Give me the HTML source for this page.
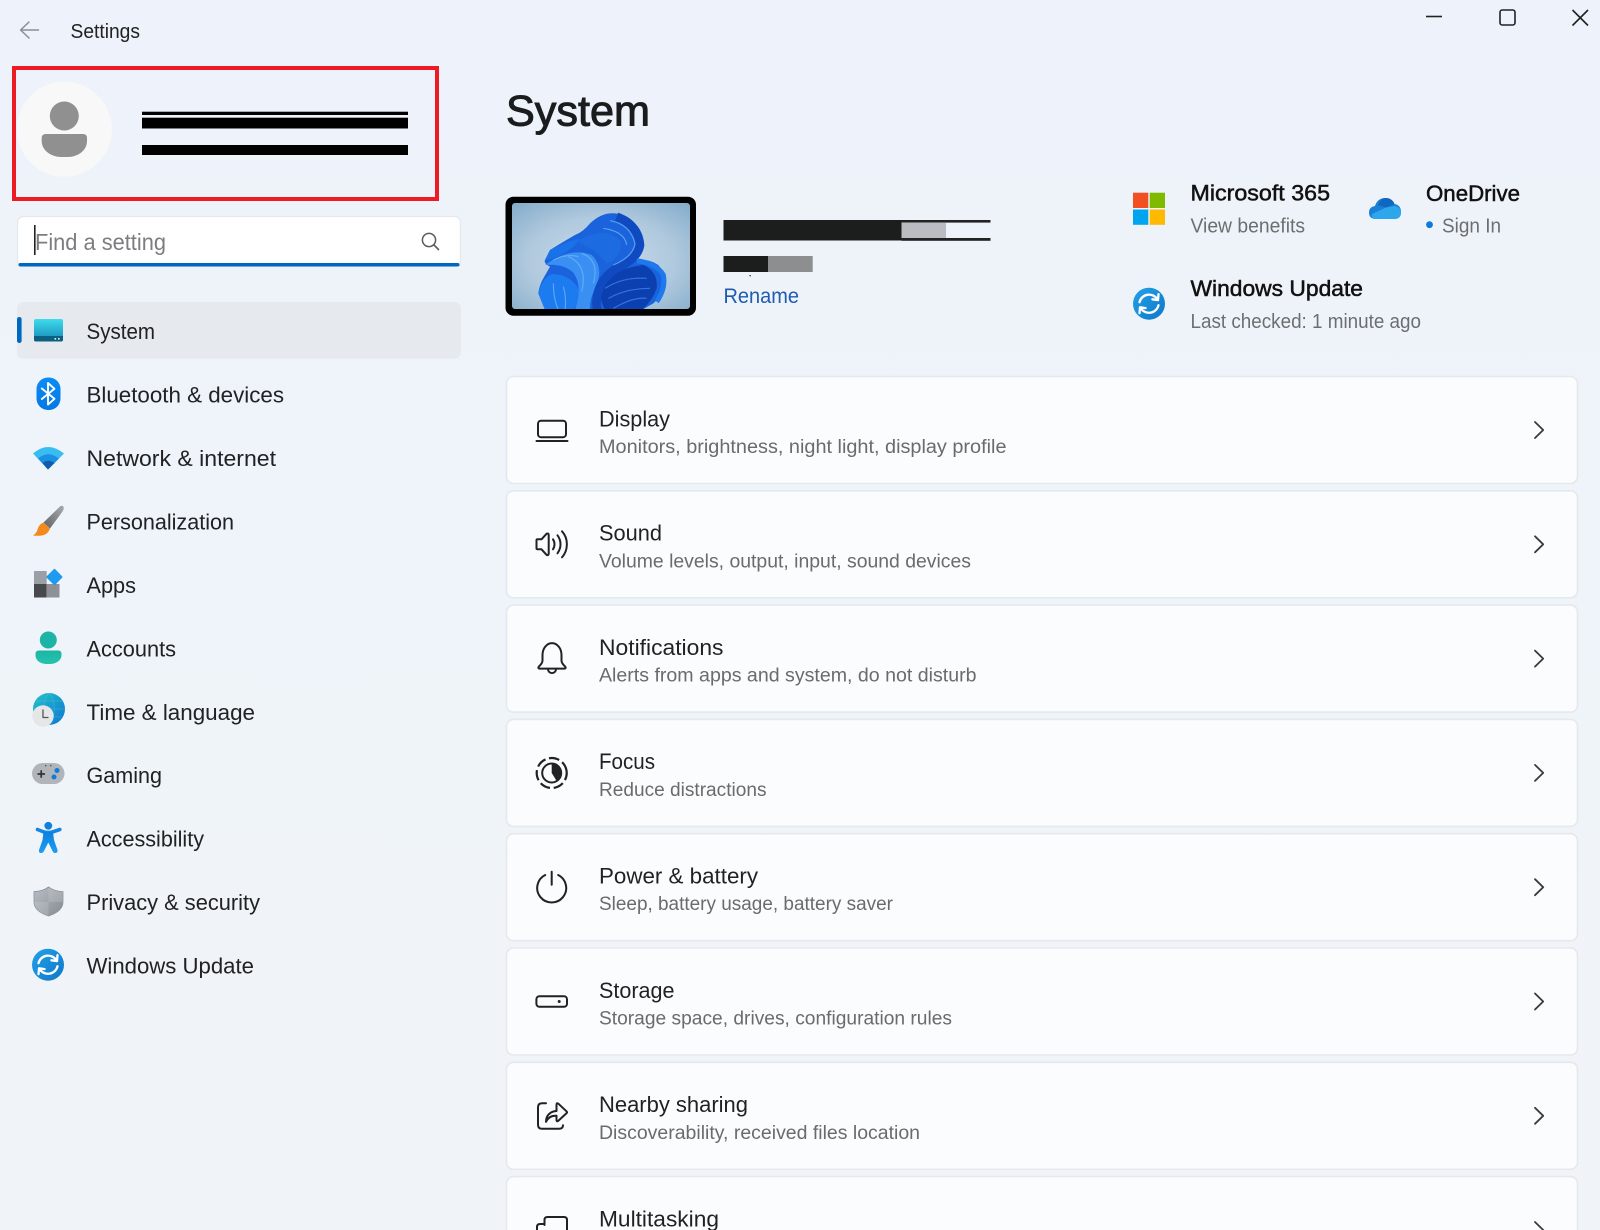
<!DOCTYPE html>
<html lang="en">
<head>
<meta charset="utf-8">
<title>Settings</title>
<style>
html,body{margin:0;padding:0;width:1600px;height:1230px;overflow:hidden;background:#eff3f9}
svg{display:block;position:absolute;left:0;top:0;filter:blur(.35px)}
text{font-family:"Liberation Sans",Arial,sans-serif}
.nav{font-size:22.5px;fill:#202224}
.ttl{font-size:22px;fill:#1f2123}
.sub{font-size:19px;fill:#696b6d}
.sb{font-size:22px;fill:#111;stroke:#111;stroke-width:.5px}
.sm{font-size:20px;fill:#6c6e70}
.card{fill:#fbfcfd;stroke:#e5e9ee;stroke-width:1.6}
.ic{fill:none;stroke:#222;stroke-width:2;stroke-linecap:round;stroke-linejoin:round}
.ch{fill:none;stroke:#3a3a3a;stroke-width:1.8;stroke-linecap:round;stroke-linejoin:round}
</style>
</head>
<body>
<svg xmlns="http://www.w3.org/2000/svg" width="1600" height="1230" viewBox="0 0 1600 1230">
<defs>
<linearGradient id="gBg" x1="0" y1="0" x2="0" y2="1"><stop offset="0" stop-color="#eef3fb"/><stop offset="1" stop-color="#f0f4f8"/></linearGradient>
<linearGradient id="gSys" x1="0" y1="0" x2="0" y2="1"><stop offset="0" stop-color="#3fdcec"/><stop offset="1" stop-color="#1487b8"/></linearGradient>
<linearGradient id="gBt" x1="0" y1="0" x2="0" y2="1"><stop offset="0" stop-color="#0a8cf5"/><stop offset="1" stop-color="#0478e6"/></linearGradient>
<linearGradient id="gTeal" x1="0" y1="0" x2="0" y2="1"><stop offset="0" stop-color="#1cb5a5"/><stop offset="1" stop-color="#25c4ae"/></linearGradient>
<linearGradient id="gGlobe" x1="0" y1="0" x2="1" y2="1"><stop offset="0" stop-color="#22c3c9"/><stop offset="1" stop-color="#0f76d2"/></linearGradient>
<linearGradient id="gShield" x1="0" y1="0" x2="1" y2="1"><stop offset="0" stop-color="#b9bfc5"/><stop offset="1" stop-color="#858b92"/></linearGradient>
<linearGradient id="gBrush" x1="1" y1="0" x2="0" y2="1"><stop offset="0" stop-color="#a6a9ad"/><stop offset="1" stop-color="#5f6367"/></linearGradient>
<linearGradient id="gAcc" x1="0" y1="0" x2="0" y2="1"><stop offset="0" stop-color="#0f7fe0"/><stop offset="1" stop-color="#1a9df0"/></linearGradient>
<linearGradient id="gUpd" x1="0" y1="0" x2="1" y2="1"><stop offset="0" stop-color="#22a2e8"/><stop offset="1" stop-color="#0f77c9"/></linearGradient>
<radialGradient id="gWall" cx=".5" cy=".55" r=".75"><stop offset="0" stop-color="#cbdcea"/><stop offset=".55" stop-color="#b0c9de"/><stop offset="1" stop-color="#82abc9"/></radialGradient>
<clipPath id="clipWall"><rect x="512" y="203" width="178" height="106" rx="3"/></clipPath>
<g id="upd">
  <circle r="16" fill="url(#gUpd)"/>
  <path d="M-9.5 -1.5A9.8 9.8 0 0 1 8 -5" fill="none" stroke="#fff" stroke-width="2.3" stroke-linecap="round"/>
  <path d="M9.5 -9.5L9 -3.6L3.4 -4.4" fill="none" stroke="#fff" stroke-width="2.3" stroke-linecap="round" stroke-linejoin="round"/>
  <path d="M9.5 1.5A9.8 9.8 0 0 1 -8 5" fill="none" stroke="#fff" stroke-width="2.3" stroke-linecap="round"/>
  <path d="M-9.5 9.5L-9 3.6L-3.4 4.4" fill="none" stroke="#fff" stroke-width="2.3" stroke-linecap="round" stroke-linejoin="round"/>
</g>
<path id="chev" class="ch" d="M-3.8 -8L4.4 0L-3.8 8"/>
</defs>

<rect width="1600" height="1230" fill="url(#gBg)"/>

<!-- title bar -->
<path d="M38.5 30H21M29 22L20.6 30L29 38" fill="none" stroke="#8b8e92" stroke-width="1.5" stroke-linecap="round" stroke-linejoin="round"/>
<text x="70.5" y="38" font-size="20" fill="#222" textLength="69.5" lengthAdjust="spacingAndGlyphs">Settings</text>
<path d="M1426 16.5H1442" stroke="#222" stroke-width="1.6"/>
<rect x="1500" y="10" width="15" height="15" rx="2.2" fill="none" stroke="#222" stroke-width="1.6"/>
<path d="M1572.5 10L1588 25.5M1588 10L1572.5 25.5" stroke="#222" stroke-width="1.6"/>

<!-- profile -->
<rect x="14" y="68" width="423" height="131" fill="none" stroke="#ed1c24" stroke-width="4"/>
<circle cx="64.3" cy="129.3" r="47.5" fill="#f8f8f8"/>
<circle cx="64.3" cy="116" r="14.5" fill="#909090"/>
<path d="M46 134H83Q87 134 87 138V141C87 151 77 157 68 157H61C52 157 41.7 151 41.7 141V138Q41.7 134 46 134Z" fill="#909090"/>
<rect x="142" y="111.7" width="266" height="3.3" fill="#000"/>
<rect x="142" y="117.7" width="266" height="10.8" fill="#000"/>
<rect x="142" y="145" width="266" height="10" fill="#000"/>

<!-- search -->
<rect x="17.5" y="216.500" width="443" height="49.500" rx="6" fill="#fff" stroke="#e4e7ec" stroke-width="1.2"/>
<path d="M18.500 264.600Q18.500 263 20.500 263H457.500Q459.500 263 459.500 264.600V265Q459.500 266.500 457.500 266.500H20.500Q18.500 266.500 18.500 265Z" fill="#0067c0"/>
<text x="35" y="250" font-size="23.5" fill="#7b7d80" textLength="131" lengthAdjust="spacingAndGlyphs">Find a setting</text>
<rect x="34" y="225" width="1.6" height="30" fill="#222"/>
<circle cx="429" cy="240" r="6.6" fill="none" stroke="#5a5c5f" stroke-width="1.5"/>
<path d="M434 245L438.5 249.5" stroke="#5a5c5f" stroke-width="1.6" stroke-linecap="round"/>

<!-- nav -->
<rect x="17" y="302" width="444" height="56.5" rx="6" fill="#e6e9ee"/>
<rect x="17" y="317" width="4.6" height="26" rx="2.3" fill="#0067c0"/>

<rect x="34" y="319" width="29" height="22.5" rx="2" fill="url(#gSys)"/>
<path d="M34 336H63V339.5Q63 341.5 61 341.5H36Q34 341.5 34 339.5Z" fill="#0d5f80"/>
<rect x="54.5" y="338" width="1.6" height="1.6" fill="#cfe"/><rect x="58" y="338" width="1.6" height="1.6" fill="#cfe"/>
<text class="nav" x="86.500" y="339.200" textLength="68.500" lengthAdjust="spacingAndGlyphs">System</text>

<rect x="36.5" y="377.5" width="24" height="32.5" rx="11.5" fill="url(#gBt)"/>
<path d="M41.800 388.500L54.500 398.800L48 404.500V383L54.500 388.800L41.800 399" fill="none" stroke="#fff" stroke-width="1.9" stroke-linejoin="round" stroke-linecap="round"/>
<text class="nav" x="86.500" y="402.600" textLength="197.500" lengthAdjust="spacingAndGlyphs">Bluetooth &amp; devices</text>

<path d="M33 453.500Q48 440.500 64 453.500L48.500 469Q48 469.500 47.500 469Z" fill="#37bdf2"/>
<path d="M38 458.500Q48 450 59 458.500L48.500 469Q48 469.500 47.500 469Z" fill="#1c8fe2"/>
<path d="M42.500 463Q48 458.500 54.500 463L48.500 469Q48 469.500 47.500 469Z" fill="#0f5cab"/>
<text class="nav" x="86.500" y="466.100" textLength="189.500" lengthAdjust="spacingAndGlyphs">Network &amp; internet</text>

<path d="M60.500 506Q63.500 505 63.800 508Q63.800 509.500 62.500 511.500L50 528.500L43.500 522.500Z" fill="url(#gBrush)"/>
<path d="M43.500 522.500L50 528.500Q48 534.500 42 535.500Q37 536 33 535.500Q37 533 38 528Q39.500 524 43.500 522.500Z" fill="#f28a1d"/>
<text class="nav" x="86.500" y="529.500" textLength="147.500" lengthAdjust="spacingAndGlyphs">Personalization</text>

<rect x="34" y="571" width="12.700" height="13" fill="#9ba0a6"/>
<rect x="34" y="584" width="12.700" height="13.500" fill="#47494c"/>
<rect x="46.700" y="584" width="12.800" height="13.500" fill="#8d9196"/>
<path d="M54.500 569.500L61.800 577L54.500 584.500L47 577Z" fill="#1e9af0" stroke="#1e9af0" stroke-width="1.500" stroke-linejoin="round"/>
<text class="nav" x="86.500" y="593" textLength="49.500" lengthAdjust="spacingAndGlyphs">Apps</text>

<circle cx="48.300" cy="640" r="8.500" fill="#1cb5a5"/>
<path d="M39 650.500H58Q61.500 650.500 61.500 654V655C61.500 661 55 664 50 664H47C41 664 35.500 661 35.500 655V654Q35.500 650.500 39 650.500Z" fill="url(#gTeal)"/>
<text class="nav" x="86.500" y="656.400" textLength="89.500" lengthAdjust="spacingAndGlyphs">Accounts</text>

<circle cx="49" cy="709" r="16" fill="url(#gGlobe)"/>
<path d="M49 693C42 700 42 718 49 725C56 718 56 700 49 693M33 709H65M36 701H62M36 717H62" fill="none" stroke="#6fd6e6" stroke-width=".7" opacity=".3"/>
<circle cx="43" cy="716" r="10.700" fill="#e5e6e8"/>
<path d="M43 710V717.500H48" fill="none" stroke="#555" stroke-width="1.300" stroke-linecap="round" stroke-linejoin="round"/>
<text class="nav" x="86.500" y="719.800" textLength="168.500" lengthAdjust="spacingAndGlyphs">Time &amp; language</text>

<rect x="32" y="763" width="32.500" height="21" rx="10.500" fill="#b1b5ba"/>
<path d="M37.500 774H45M41.200 770.300V777.700" stroke="#333" stroke-width="1.700"/>
<circle cx="57" cy="770.500" r="2.500" fill="#0f7ae0"/><circle cx="54" cy="777" r="2.500" fill="#0f7ae0"/>
<rect x="45" y="765" width="1.500" height="1.300" fill="#555"/><rect x="50" y="765" width="1.500" height="1.300" fill="#555"/>
<text class="nav" x="86.500" y="783.200" textLength="75.500" lengthAdjust="spacingAndGlyphs">Gaming</text>

<circle cx="48.300" cy="825.800" r="3.900" fill="#0f7fe0"/>
<path d="M37.500 829.500L44 832Q48.300 833 52.500 832L59.800 829.500" fill="none" stroke="#1486e6" stroke-width="3.600" stroke-linecap="round"/>
<path d="M43.500 832H53L54 840L57.500 850Q58 853 55 853Q53.500 853 52.500 851L48.300 842.500L44 851Q43 853 41 853Q38.500 853 39 850L42.500 840Z" fill="url(#gAcc)"/>
<text class="nav" x="86.500" y="846.700" textLength="117.500" lengthAdjust="spacingAndGlyphs">Accessibility</text>

<path d="M48.500 887C53 890.500 58 891.500 63 891.500V902C63 909 56 913.500 48.500 916C41 913.500 34 909 34 902V891.500C39 891.500 44 890.500 48.500 887Z" fill="url(#gShield)" stroke="#8d9298" stroke-width=".8"/>
<path d="M48.500 887V916C41 913.500 34 909 34 902H63V891.500C58 891.500 53 890.500 48.500 887Z" fill="#fff" opacity=".13"/>
<text class="nav" x="86.500" y="910.200" textLength="173.500" lengthAdjust="spacingAndGlyphs">Privacy &amp; security</text>

<use href="#upd" transform="translate(48 964.700)"/>
<text class="nav" x="86.500" y="973.400" textLength="167.500" lengthAdjust="spacingAndGlyphs">Windows Update</text>

<!-- header -->
<text x="506" y="125.700" font-size="43" fill="#1b1c1d" stroke="#1b1c1d" stroke-width="1" textLength="144" lengthAdjust="spacingAndGlyphs">System</text>

<!-- device -->
<rect x="505.500" y="196.700" width="190.500" height="119" rx="8" fill="#000"/>
<rect x="512" y="203" width="178" height="106" rx="3" fill="url(#gWall)"/>
<g clip-path="url(#clipWall)">
  <g transform="translate(510 200) scale(.33333)">
    <path d="M105 330L85 280Q88 255 100 235L120 200Q100 190 105 180L120 150Q160 125 195 105Q220 95 240 70Q270 42 300 40Q345 38 370 65Q395 100 395 140Q392 165 375 180Q415 175 445 195Q470 225 465 260Q455 290 430 310L395 330Z" fill="#1a63dc"/>
    <path d="M85 280Q100 225 130 222Q180 225 205 265Q215 300 190 330H105Z" fill="#1d7bf0"/>
    <path d="M120 150Q170 125 210 115Q190 150 130 175L105 180Z" fill="#1a72e8"/>
    <path d="M105 195Q180 140 245 165Q285 205 255 265Q238 300 240 330H195Q220 260 190 218Q160 190 105 195Z" fill="#3a8ff2"/>
    <path d="M200 125Q280 75 330 120Q340 170 290 190Q260 150 200 125Z" fill="#1c6be0"/>
    <path d="M270 250Q320 205 400 195Q445 215 440 265Q425 305 395 330H285Q265 290 270 250Z" fill="#0c3fb0"/>
    <path d="M320 50Q385 75 390 135Q385 175 320 205Q280 230 268 265Q255 300 262 330" fill="none" stroke="#0f4ac0" stroke-width="26"/>
    <path d="M380 182Q440 190 460 225Q468 265 440 305" fill="none" stroke="#1e78ee" stroke-width="15"/>
    <path d="M300 62Q360 72 375 130Q370 170 310 195M280 85Q345 95 350 135M215 160Q270 180 250 250M175 170Q235 195 215 275M130 180Q170 160 205 170M160 260Q170 295 165 330M130 250Q130 295 145 330" fill="none" stroke="#6fb4f8" stroke-width="3.500" opacity=".75"/>
    <path d="M285 265Q340 230 410 235M295 295Q350 265 420 265M310 325Q370 290 410 295" fill="none" stroke="#3a7ee8" stroke-width="3.500" opacity=".85"/>
  </g>
</g>

<rect x="723.500" y="220" width="178" height="20.500" fill="#1c1e1d"/>
<rect x="901.500" y="223" width="44.500" height="15" fill="#b9bcc0"/>
<rect x="901.500" y="220" width="89" height="2.600" fill="#222"/>
<rect x="901.500" y="238" width="89" height="2.800" fill="#222"/>
<rect x="723.500" y="256" width="44.500" height="16" fill="#1c1e1d"/>
<rect x="768" y="256" width="44.700" height="16" fill="#8c8e90"/>
<rect x="749.500" y="275" width="1.300" height="1.300" fill="#333"/>
<text x="723.500" y="303" font-size="21" fill="#1f5bae" textLength="75.500" lengthAdjust="spacingAndGlyphs">Rename</text>

<!-- top right -->
<rect x="1133" y="192.700" width="15.300" height="15.300" fill="#f25022"/>
<rect x="1149.700" y="192.700" width="15.300" height="15.300" fill="#7fba00"/>
<rect x="1133" y="209.500" width="15.300" height="15.300" fill="#00a4ef"/>
<rect x="1149.700" y="209.500" width="15.300" height="15.300" fill="#ffb900"/>
<text class="sb" x="1190.500" y="200.700" textLength="139.500" lengthAdjust="spacingAndGlyphs">Microsoft 365</text>
<text class="sm" x="1190.500" y="232.700" textLength="114.500" lengthAdjust="spacingAndGlyphs">View benefits</text>

<path d="M1375 219Q1369 218.500 1369 212.500Q1369 207 1375 206Q1377.500 198 1385.500 198Q1392 198 1394.500 204Q1401 205 1401 212Q1401 218.500 1395 219Z" fill="#1a7fd6"/>
<path d="M1375 219Q1370.500 218.500 1372 214L1386 207.500L1394.500 206Q1401 207 1401 212.500Q1401 218.500 1395 219Z" fill="#2ea6ec"/>
<path d="M1378 205Q1381 198 1385.500 198Q1392 198 1394.500 204L1386 207.500Z" fill="#0f67bf"/>
<text class="sb" x="1426" y="201" textLength="94" lengthAdjust="spacingAndGlyphs">OneDrive</text>
<circle cx="1429.500" cy="224.700" r="3.400" fill="#0f78dc"/>
<text class="sm" x="1442" y="232.500" textLength="59" lengthAdjust="spacingAndGlyphs">Sign In</text>

<use href="#upd" transform="translate(1149 303.700)"/>
<text class="sb" x="1190.500" y="295.800" textLength="172.500" lengthAdjust="spacingAndGlyphs">Windows Update</text>
<text class="sm" x="1190.500" y="328" textLength="230.500" lengthAdjust="spacingAndGlyphs">Last checked: 1 minute ago</text>

<!-- cards -->
<rect class="card" x="506.500" y="376.500" width="1071" height="107" rx="7"/>
<rect class="card" x="506.500" y="490.800" width="1071" height="107" rx="7"/>
<rect class="card" x="506.500" y="605.100" width="1071" height="107" rx="7"/>
<rect class="card" x="506.500" y="719.400" width="1071" height="107" rx="7"/>
<rect class="card" x="506.500" y="833.700" width="1071" height="107" rx="7"/>
<rect class="card" x="506.500" y="948" width="1071" height="107" rx="7"/>
<rect class="card" x="506.500" y="1062.300" width="1071" height="107" rx="7"/>
<rect class="card" x="506.500" y="1176.600" width="1071" height="107" rx="7"/>

<!-- Display -->
<g transform="translate(552 430)">
  <rect class="ic" x="-14" y="-9.300" width="28" height="16.500" rx="3"/>
  <path class="ic" d="M-15.500 11H15.500"/>
</g>
<text class="ttl" x="599" y="426.300" textLength="71" lengthAdjust="spacingAndGlyphs">Display</text>
<text class="sub" x="599" y="453" textLength="407.500" lengthAdjust="spacingAndGlyphs">Monitors, brightness, night light, display profile</text>
<use href="#chev" transform="translate(1538.800 430)"/>

<!-- Sound -->
<g transform="translate(552 544.300)">
  <path class="ic" d="M-15.500 -4Q-15.500 -5 -14.500 -5H-10.500L-5.500 -10.500Q-3.500 -11.500 -3.300 -9.500V9.500Q-3.500 11.500 -5.500 10.500L-10.500 5H-14.500Q-15.500 5 -15.500 4Z"/>
  <path class="ic" d="M1 -5C3 -2 3 2 1 5M5.500 -9C9.500 -3.500 9.500 3.500 5.500 9M10 -13C16.500 -6 16.500 6 10 13"/>
</g>
<text class="ttl" x="599" y="540.600" textLength="63" lengthAdjust="spacingAndGlyphs">Sound</text>
<text class="sub" x="599" y="567.300" textLength="372" lengthAdjust="spacingAndGlyphs">Volume levels, output, input, sound devices</text>
<use href="#chev" transform="translate(1538.800 544.300)"/>

<!-- Notifications -->
<g transform="translate(552 658.600)">
  <path class="ic" d="M-9.500 -3.500C-9.500 -10.500 -5 -15.500 0 -15.500C5 -15.500 9.500 -10.500 9.500 -3.500V2C9.500 5 12.500 7 13.500 8.500Q14 10 12.500 10H-12.500Q-14 10 -13.500 8.500C-12.500 7 -9.500 5 -9.500 2Z"/>
  <path class="ic" d="M-4 10.500A4 4 0 0 0 4 10.500"/>
</g>
<text class="ttl" x="599" y="654.900" textLength="124.500" lengthAdjust="spacingAndGlyphs">Notifications</text>
<text class="sub" x="599" y="681.600" textLength="377.500" lengthAdjust="spacingAndGlyphs">Alerts from apps and system, do not disturb</text>
<use href="#chev" transform="translate(1538.800 658.600)"/>

<!-- Focus -->
<g transform="translate(551.700 773)">
  <circle r="15" fill="none" stroke="#222" stroke-width="2.200" stroke-dasharray="10.500 3.700" transform="rotate(-12)"/>
  <circle r="9.500" fill="none" stroke="#222" stroke-width="2"/>
  <path d="M0 -9.500A9.500 9.500 0 0 1 5 8L0 0Z" fill="#222"/>
</g>
<text class="ttl" x="599" y="769.200" textLength="56" lengthAdjust="spacingAndGlyphs">Focus</text>
<text class="sub" x="599" y="795.900" textLength="167.500" lengthAdjust="spacingAndGlyphs">Reduce distractions</text>
<use href="#chev" transform="translate(1538.800 772.900)"/>

<!-- Power -->
<g transform="translate(551.700 887.800)">
  <path class="ic" d="M-6.500 -12.800A14.500 14.500 0 1 0 6.500 -12.800"/>
  <path class="ic" d="M0 -16V-3"/>
</g>
<text class="ttl" x="599" y="883.500" textLength="159" lengthAdjust="spacingAndGlyphs">Power &amp; battery</text>
<text class="sub" x="599" y="910.200" textLength="294" lengthAdjust="spacingAndGlyphs">Sleep, battery usage, battery saver</text>
<use href="#chev" transform="translate(1538.800 887.200)"/>

<!-- Storage -->
<g transform="translate(551.700 1001.500)">
  <rect class="ic" x="-15.300" y="-5.300" width="30.600" height="10.600" rx="3"/>
  <circle cx="7.500" cy="0" r="1.500" fill="#222"/>
</g>
<text class="ttl" x="599" y="997.800" textLength="75.500" lengthAdjust="spacingAndGlyphs">Storage</text>
<text class="sub" x="599" y="1024.500" textLength="353" lengthAdjust="spacingAndGlyphs">Storage space, drives, configuration rules</text>
<use href="#chev" transform="translate(1538.800 1001.500)"/>

<!-- Nearby sharing -->
<g transform="translate(552 1115.800)">
  <path class="ic" d="M-6 -12.500H-10Q-14 -12.500 -14 -8.500V9Q-14 13 -10 13H7Q11 13 11 9.500"/>
  <path class="ic" d="M-6 6C-6 -1 -1 -4.500 4.500 -4.800V-11Q4.500 -13.500 6.500 -12L14.500 -4.500Q15.500 -3.500 14.500 -2.500L6.500 4.800Q4.500 6.500 4.500 4V0C-1 -.5 -4 2 -6 6Z"/>
</g>
<text class="ttl" x="599" y="1112.100" textLength="149" lengthAdjust="spacingAndGlyphs">Nearby sharing</text>
<text class="sub" x="599" y="1138.800" textLength="321" lengthAdjust="spacingAndGlyphs">Discoverability, received files location</text>
<use href="#chev" transform="translate(1538.800 1115.800)"/>

<!-- Multitasking -->
<g transform="translate(552 1230)">
  <path class="ic" d="M-7.500 -5V-10Q-7.500 -13 -4.500 -13H12Q15 -13 15 -10V6"/>
  <path class="ic" d="M-7.500 -6H-12Q-15 -6 -15 -3V6"/>
</g>
<text class="ttl" x="599" y="1226.400" textLength="120" lengthAdjust="spacingAndGlyphs">Multitasking</text>
<use href="#chev" transform="translate(1538.800 1230)"/>
</svg>
</body>
</html>
